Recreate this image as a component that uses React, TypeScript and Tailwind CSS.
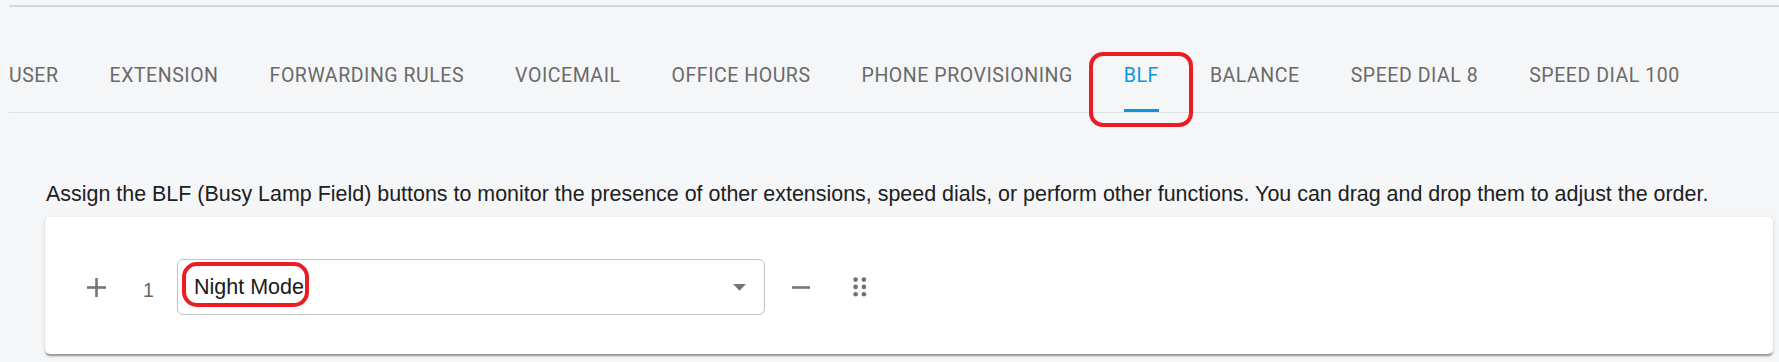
import React from "react";

const tabs = [
  "USER",
  "EXTENSION",
  "FORWARDING RULES",
  "VOICEMAIL",
  "OFFICE HOURS",
  "PHONE PROVISIONING",
  "BLF",
  "BALANCE",
  "SPEED DIAL 8",
  "SPEED DIAL 100",
];

function PlusIcon() {
  return (
    <svg width="19" height="19" viewBox="0 0 19 19" className="block">
      <rect x="8.2" y="0" width="2.6" height="19" fill="#767676" />
      <rect x="0" y="8.2" width="19" height="2.6" fill="#767676" />
    </svg>
  );
}

function MinusIcon() {
  return (
    <svg width="18" height="3" viewBox="0 0 18 3" className="block">
      <rect x="0" y="0.2" width="18" height="2.6" fill="#767676" />
    </svg>
  );
}

function DragIcon() {
  return (
    <svg width="14" height="20" viewBox="0 0 14 20" className="block">
      {[2.6, 10.9].map((cx) =>
        [2.6, 9.9, 17.3].map((cy) => (
          <circle key={`${cx}-${cy}`} cx={cx} cy={cy} r="2.3" fill="#707070" />
        ))
      )}
    </svg>
  );
}

function ArrowDown() {
  return (
    <svg width="13" height="7" viewBox="0 0 13 7" className="block">
      <polygon points="0,0 13,0 6.5,6.8" fill="#767676" />
    </svg>
  );
}

export default function App() {
  return (
    <div className="relative w-[1779px] h-[362px] overflow-hidden bg-[#f5f6f8] pt-[5px] font-['Roboto','Liberation_Sans',sans-serif]">
      <div className="ml-[9px] h-[2px] bg-[#d6d7d9]" />
      <div className="ml-[9px] flex h-[106px] gap-[51px] border-b border-[#dfe0e2]">
        {tabs.map((t) => {
          const active = t === "BLF";
          return (
            <div key={t} className="flex h-full flex-col pt-[59px]">
              <span
                className={`whitespace-nowrap text-[19.5px] leading-[20px] tracking-[0.028em] ${
                  active ? "text-[#0a96dd]" : "text-[#6a6a6a]"
                }`}
              >
                {t}
              </span>
              <div className={`mt-auto h-[3px] ${active ? "bg-[#0a96dd]" : "bg-transparent"}`} />
            </div>
          );
        })}
      </div>

      <p className="ml-[46px] mt-[69px] whitespace-nowrap font-['Liberation_Sans','Arial',sans-serif] text-[21.45px] leading-[24px] text-[#202020]">
        Assign the BLF (Busy Lamp Field) buttons to monitor the presence of other extensions, speed dials, or perform other functions. You can drag and drop them to adjust the order.
      </p>

      <div className="ml-[45px] mt-[11px] w-[1728px] rounded-[5px] bg-white pt-[42px] pb-[39px] shadow-[0_3px_1.5px_-1.5px_rgba(0,0,0,0.2),0_1.5px_1.5px_0_rgba(0,0,0,0.14),0_1.5px_4.5px_0_rgba(0,0,0,0.12)]">
        <div className="flex h-[56px] items-center pl-[42px]">
          <PlusIcon />
          <span className="ml-[37px] mt-[6px] w-[11px] font-['Liberation_Sans','Arial',sans-serif] text-[19.5px] leading-[20px] text-[#666]">1</span>
          <div className="ml-[23px] flex h-[56px] w-[588px] items-center justify-between rounded-[6px] border border-[#c4c4c4] pl-[16px] pr-[18px]">
            <span className="font-['Liberation_Sans','Arial',sans-serif] text-[21.5px] leading-[24px] text-[#1a1a1a]">Night Mode</span>
            <ArrowDown />
          </div>
          <div className="ml-[27px]">
            <MinusIcon />
          </div>
          <div className="ml-[43px]">
            <DragIcon />
          </div>
        </div>
      </div>

      <div className="pointer-events-none absolute left-[1089px] top-[52px] h-[75px] w-[104px] rounded-[14px] border-[4px] border-[#ed1c24]" />
      <div className="pointer-events-none absolute left-[182px] top-[262px] h-[45px] w-[127px] rounded-[15px] border-[4px] border-[#ed1c24]" />
    </div>
  );
}
